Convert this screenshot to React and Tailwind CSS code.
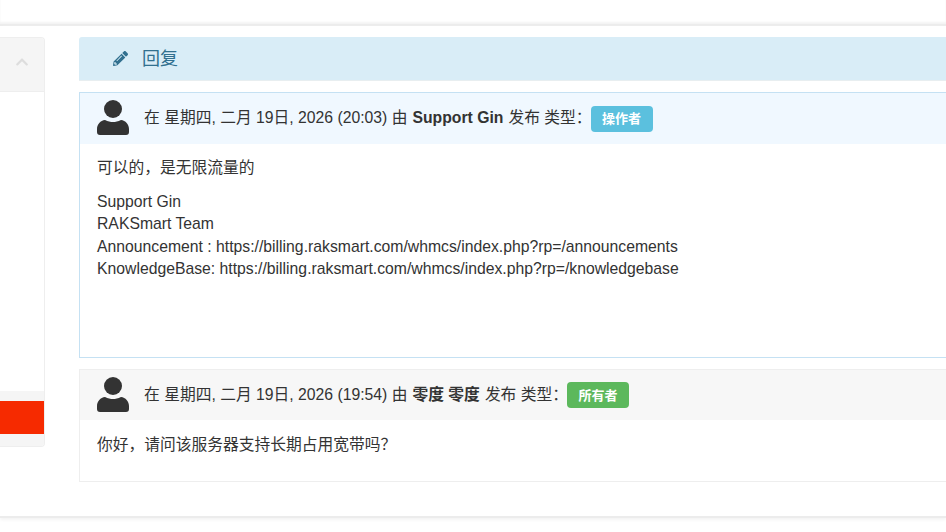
import React from "react";
import { FaChevronUp, FaPencilAlt } from "react-icons/fa";

function Avatar({ mb }) {
  return (
    <svg width="32" height="36" viewBox="0 0 32 36" className={`shrink-0 block ${mb}`} fill="#333333">
      <circle cx="16" cy="9" r="9" />
      <path d="M8 20 C11 21.6 13.5 22 16 22 C18.5 22 21 21.6 24 20 C28.5 20.4 32 24.5 32 29 L32 32 C32 34 31 35 29 35 L3 35 C1 35 0 34 0 32 L0 29 C0 24.5 3.5 20.4 8 20 Z" />
    </svg>
  );
}

function Header({ bg, h, mb, date, name, badge, badgeBg }) {
  return (
    <div className={`flex items-center pl-[17px] ${h} ${bg}`}>
      <Avatar mb={mb} />
      <div className="ml-[15px] flex items-center whitespace-nowrap text-[15.75px] leading-[23px] text-[#333333]">
        <span className="mb-[2px]">在 星期四, 二月 19日, 2026 ({date}) 由 </span>
        <strong className="font-bold mx-[5px] mb-[2px]">{name}</strong>
        <span className="mb-[2px]">发布 类型：</span>
        <span className={`ml-[-1px] flex items-center justify-center h-[26px] w-[62px] rounded-[4px] text-white text-[13px] font-bold ${badgeBg}`}>{badge}</span>
      </div>
    </div>
  );
}

export default function App() {
  return (
    <div className="w-[946px] h-[532px] overflow-hidden bg-white text-[15.75px] leading-[22.5px] text-[#333333] font-['Liberation_Sans','Noto_Sans_CJK_SC',sans-serif] flex flex-col">
      <div className="h-[26px] shrink-0 border-b-2 border-[#ececec] shadow-[inset_0_-2px_2px_#f4f4f4]" />
      <div className="h-[492px] shrink-0 border-b-2 border-[#ececec] shadow-[0_2px_3px_#f4f4f4] flex items-start pt-[11px]">
        <aside className="w-[45px] h-[410px] shrink-0 flex flex-col border-r border-b border-t border-[#eeeeee] rounded-r-[4px] overflow-hidden">
          <div className="h-[54px] shrink-0 bg-[#f5f5f5] border-b border-[#eeeeee] flex justify-end items-center pr-[15px] pb-[6px]">
            <FaChevronUp size={14} color="#dddddd" />
          </div>
          <div className="flex-1" />
          <div className="h-[55px] shrink-0 bg-[#f5f5f5] pt-[10px]">
            <div className="h-[33px] bg-[#f62a00]" />
          </div>
        </aside>
        <main className="ml-[34px] w-[900px] shrink-0 flex flex-col">
          <div className="h-[44px] shrink-0 bg-[#d9edf7] rounded-t-[3px] border-b border-[#e8eef0] flex items-center pl-[34px] text-[#31708f]">
            <FaPencilAlt size={15} color="#31708f" className="mr-[14px]" />
            <span className="text-[18px] leading-[20px]">回复</span>
          </div>
          <section className="mt-[11px] h-[266px] shrink-0 border border-[#c5e1f3]">
            <Header bg="bg-[#f0f8ff]" h="h-[51px]" mb="mb-[2px]" date="20:03" name="Support Gin" badge="操作者" badgeBg="bg-[#5bc0de]" />
            <div className="pl-[17px] pt-[13px]">
              <p className="mb-[11px]">可以的，是无限流量的</p>
              <p>Support Gin<br />RAKSmart Team<br />Announcement : https://billing.raksmart.com/whmcs/index.php?rp=/announcements<br />KnowledgeBase: https://billing.raksmart.com/whmcs/index.php?rp=/knowledgebase</p>
            </div>
          </section>
          <section className="mt-[11px] h-[113px] shrink-0 border border-[#eeeeee]">
            <Header bg="bg-[#f7f7f7]" h="h-[50px]" mb="mb-0" date="19:54" name="零度 零度" badge="所有者" badgeBg="bg-[#5cb85c]" />
            <div className="pl-[17px] pt-[14px]">
              <p>你好，请问该服务器支持长期占用宽带吗？</p>
            </div>
          </section>
        </main>
      </div>
    </div>
  );
}
